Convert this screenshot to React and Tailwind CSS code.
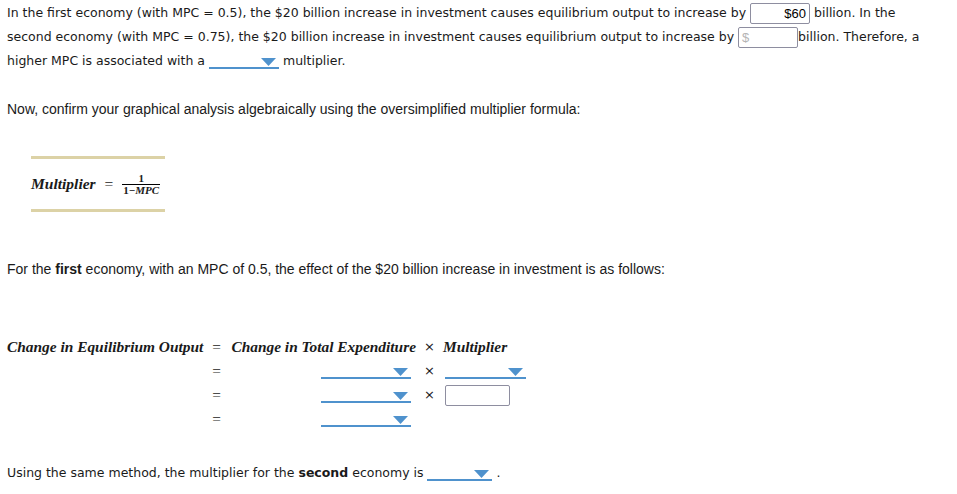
import React from 'react';

const verdana = { fontFamily: '"DejaVu Sans", Verdana, sans-serif' };

function Dropdown({ width = 'w-[70px]' }) {
  return (
    <span className={`relative inline-block align-middle h-[15px] ${width} border-b-2 border-[#4f92cd]`}>
      <svg
        className="absolute right-[3px] top-[4px]"
        width="15"
        height="8"
        viewBox="0 0 15 8"
      >
        <polygon points="0,0 15,0 7.5,8" fill="#4f92cd" />
      </svg>
    </span>
  );
}

function Box({ width = 'w-[60px]', value = '', placeholder = '' }) {
  return (
    <span
      className={`inline-flex items-center h-[21px] ${width} border border-[#8e8ea0] rounded-[2px] px-[3px] align-middle font-['Liberation_Sans',sans-serif] text-[13px] ${
        value ? 'justify-end text-black' : 'justify-start text-[#b5b5b5]'
      }`}
    >
      {value || placeholder}
    </span>
  );
}

export default function App() {
  return (
    <div className="bg-white w-[957px] h-[494px] pl-[7px] pr-[27px] pt-[1px] text-[12.5px] text-[#1a1a1a] font-['DejaVu_Sans',Verdana,sans-serif]">
      <p className="leading-[24px]">
        In the first economy (with MPC = 0.5), the $20 billion increase in investment causes equilibrium output to increase by{' '}
        <Box value="$60" width="w-[60px]" /> billion. In the second economy (with MPC = 0.75), the $20 billion increase in
        investment causes equilibrium output to increase by <Box placeholder="$" width="w-[60px]" />
        billion. Therefore, a higher MPC is associated with a <Dropdown width="w-[70px]" /> multiplier.
      </p>

      <p className="mt-[24px] leading-[24px] font-['Liberation_Sans',sans-serif] text-[14px]">
        Now, confirm your graphical analysis algebraically using the oversimplified multiplier formula:
      </p>

      <div className="mt-[35px] ml-[24px] w-[134px] border-t-[3px] border-b-[3px] border-[#dcd2a6] py-[13px]">
        <div className="flex items-center h-[24px] font-['Liberation_Serif',serif] italic font-bold text-[15.5px]">
          <span>Multiplier</span>
          <span className="not-italic font-normal mx-[9px]">=</span>
          <span className="inline-flex flex-col items-center text-[11px] leading-[11px]">
            <span className="not-italic">1</span>
            <span className="border-t border-black px-[1px]">
              <span className="not-italic">1−</span>MPC
            </span>
          </span>
        </div>
      </div>

      <p className="mt-[45px] leading-[24px] font-['Liberation_Sans',sans-serif] text-[14px]">
        For the <b>first</b> economy, with an MPC of 0.5, the effect of the $20 billion increase in investment is as follows:
      </p>

      <div className="mt-[54px] grid grid-cols-[196px_27px_186px_27px_auto] auto-rows-[24px] items-center font-['Liberation_Serif',serif] italic font-bold text-[15.4px]">
        <span className="text-left whitespace-nowrap">Change in Equilibrium Output</span>
        <span className="not-italic font-normal text-center">=</span>
        <span className="text-right whitespace-nowrap">Change in Total Expenditure</span>
        <span className="not-italic font-normal text-center text-[13px]" style={verdana}>×</span>
        <span>Multiplier</span>

        <span />
        <span className="not-italic font-normal text-center">=</span>
        <span className="flex justify-end pr-[5px]"><Dropdown width="w-[90px]" /></span>
        <span className="not-italic font-normal text-center text-[13px]" style={verdana}>×</span>
        <span className="flex pl-[2px]"><Dropdown width="w-[81px]" /></span>

        <span />
        <span className="not-italic font-normal text-center">=</span>
        <span className="flex justify-end pr-[5px]"><Dropdown width="w-[90px]" /></span>
        <span className="not-italic font-normal text-center text-[13px]" style={verdana}>×</span>
        <span className="flex pl-[2px]"><Box width="w-[65px]" /></span>

        <span />
        <span className="not-italic font-normal text-center">=</span>
        <span className="flex justify-end pr-[5px]"><Dropdown width="w-[90px]" /></span>
        <span />
        <span />
      </div>

      <p className="mt-[30px] leading-[24px]">
        Using the same method, the multiplier for the <b>second</b> economy is <Dropdown width="w-[65px]" /> .
      </p>
    </div>
  );
}
